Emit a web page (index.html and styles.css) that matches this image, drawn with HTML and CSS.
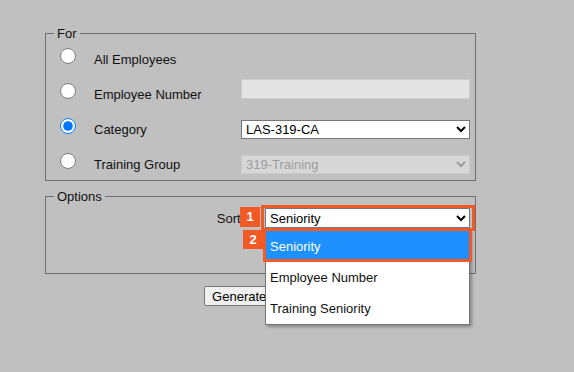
FILE: index.html
```html
<!DOCTYPE html>
<html>
<head>
<meta charset="utf-8">
<title>Training Report</title>
<link rel="stylesheet" href="styles.css">
</head>
<body>
<form class="report">
	<fieldset class="box">
		<legend>For</legend>
		<div class="choices">
			<input type="radio" name="who" class="rad">
			<label class="lbl">All Employees</label>
			<span></span>

			<input type="radio" name="who" class="rad">
			<label class="lbl">Employee Number</label>
			<input type="text" class="txt" disabled>

			<input type="radio" name="who" class="rad" checked>
			<label class="lbl">Category</label>
			<select class="sel">
				<option>LAS-319-CA</option>
			</select>

			<input type="radio" name="who" class="rad">
			<label class="lbl">Training Group</label>
			<select class="sel" disabled>
				<option>319-Training</option>
			</select>
		</div>
	</fieldset>

	<fieldset class="box opts">
		<legend>Options</legend>
		<div class="sortrow">
			<label class="lbl">Sort by</label>
			<select class="sel sortsel">
				<option>Seniority</option>
				<option>Employee Number</option>
				<option>Training Seniority</option>
			</select>
		</div>
	</fieldset>

	<div class="actions">
		<button type="button" class="btn">Generate Report</button>
	</div>

	<!-- open list of the sort select, with the two callouts -->
	<div class="popup">
		<ul class="drop">
			<li class="on">Seniority</li>
			<li>Employee Number</li>
			<li>Training Seniority</li>
		</ul>
		<span class="mark mark1"></span>
		<span class="mark mark2"></span>
		<span class="badge b1">1</span>
		<span class="badge b2">2</span>
	</div>
</form>
</body>
</html>
```

FILE: styles.css
```css
*{ box-sizing:border-box;}
html, body{ min-height:100%;}
body{ margin:0; min-height:372px; background:#c0c0c0; font:13px "Liberation Sans", Arial, sans-serif; color:#111;}
.report{ position:relative; padding:26px 0 0 45px; width:476px;}
.box{ width:431px; margin:0; border:1px solid #6e6e6e; padding:3px 5px 1px 8px;}
.box legend{ padding:0 3px; line-height:15px; font-size:13px;}
.opts{ margin-top:8px; padding:4px 5px 45px 8px;}
.choices{ display:grid; grid-template-columns:40px 147px 229px; grid-auto-rows:30px; row-gap:5px; align-items:center;}
.rad{ width:16px; height:16px; margin:0 0 6px 6px;}
.lbl{ line-height:15px;}
.txt{ height:20px; margin:0 0 10px 0; border:1px solid #cdcdcd; background:#e4e4e4;}
.sel{ height:19px; margin:0; font:13px "Liberation Sans", Arial, sans-serif; color:#000; background:#fff; border:1px solid #767676; border-radius:0;}
.sel:disabled{ background:#e2e2e2; color:#8d8d8d; border-color:#cfcfcf;}
.sortrow{ display:flex; justify-content:flex-end; align-items:center; gap:7px; height:20px;}
.sortsel{ width:205px; height:20px;}
.actions{ width:431px; text-align:center; margin-top:12px;}
.btn{ height:20px; padding:0 7px; font:13px "Liberation Sans", Arial, sans-serif; color:#000; background:#efefef; border:1px solid #767676; border-radius:2px;}

/* popup sits over the sort select (select box at 265,208) */
.popup{ position:absolute; left:265px; top:208px; width:205px; height:20px;}
.drop{ position:absolute; left:0; top:22px; width:205px; margin:0; padding:0; list-style:none; background:#fff; border:1px solid #767676; box-shadow:2px 2px 3px rgba(0,0,0,.3);}
.drop li{ height:31px; line-height:31px; padding-left:4px; color:#111;}
.drop .on{ background:#1e90ff; color:#fff;}
.mark{ position:absolute; border:3px solid #f15a24;}
.mark1{ left:-4px; top:-3px; width:214px; height:26px;}
.mark2{ left:-2px; top:20px; width:209px; height:34px;}
.badge{ position:absolute; width:20px; height:20px; background:#f15a24; color:#fff; font-weight:bold; font-size:13px; line-height:20px; text-align:center;}
.b1{ left:-25px; top:-1px;}
.b2{ left:-22px; top:22px; height:19px; line-height:19px;}
```
